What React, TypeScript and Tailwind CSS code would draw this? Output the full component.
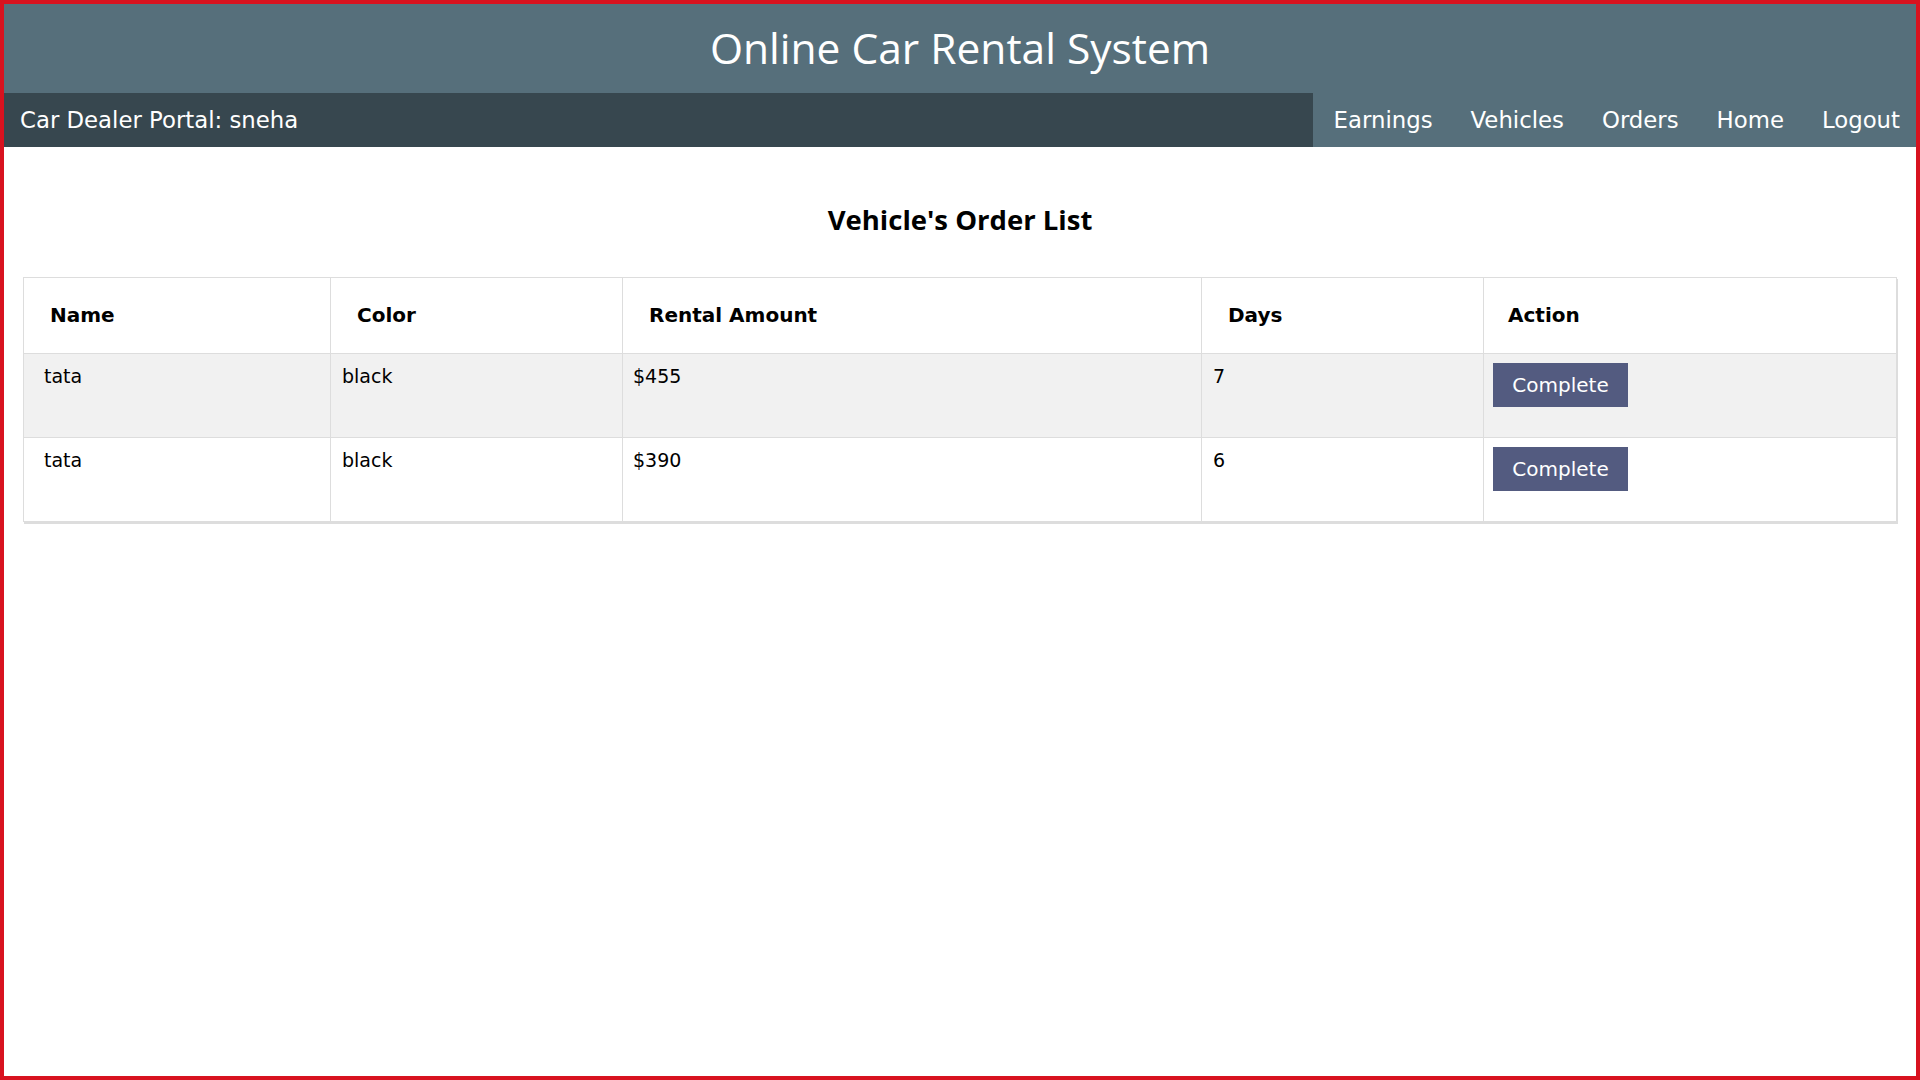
import React from 'react';

const orders = [
  { name: 'tata', color: 'black', amount: '$455', days: '7' },
  { name: 'tata', color: 'black', amount: '$390', days: '6' },
];

const links = ['Earnings', 'Vehicles', 'Orders', 'Home', 'Logout'];

export default function App() {
  return (
    <div className="min-h-screen h-[1080px] border-4 border-[#d8121f] bg-white text-black font-['DejaVu_Sans',sans-serif]">
      <header className="h-[89px] bg-[#566f7b] flex items-center justify-center">
        <h1 className="text-[42.5px] text-white font-['Open_Sans',sans-serif] font-normal leading-none">Online Car Rental System</h1>
      </header>

      <nav className="h-[54px] flex bg-[#566f7b] text-white text-[22.8px]">
        <div className="flex-1 bg-[#37474f] flex items-center pl-[16px]">Car Dealer Portal: sneha</div>
        <div className="flex items-center pl-[2px]">
          {links.map((l) => (
            <a key={l} href="#" className="px-[19px] last:pr-[16px] h-full flex items-center">{l}</a>
          ))}
        </div>
      </nav>

      <main className="px-[19px]">
        <h2 className="text-center font-['Open_Sans',sans-serif] font-bold text-[27.5px] mt-[59px] mb-[43px] leading-none">Vehicle's Order List</h2>

        <table className="w-full border-collapse border border-[#ddd] shadow-[1px_2px_0_#ddd] text-[19px]">
          <thead>
            <tr className="h-[76px] text-[20px]">
              <th className="w-[307px] border border-[#ddd] text-left font-bold pl-[26px]">Name</th>
              <th className="w-[292px] border border-[#ddd] text-left font-bold pl-[26px]">Color</th>
              <th className="w-[579px] border border-[#ddd] text-left font-bold pl-[26px]">Rental Amount</th>
              <th className="w-[282px] border border-[#ddd] text-left font-bold pl-[26px]">Days</th>
              <th className="border border-[#ddd] text-left font-bold pl-[24px]">Action</th>
            </tr>
          </thead>
          <tbody>
            {orders.map((o, i) => (
              <tr key={i} className={i % 2 === 0 ? 'h-[84px] bg-[#f1f1f1]' : 'h-[84px] bg-white'}>
                <td className="border border-[#ddd] align-top pt-[8px] pl-[20px]">{o.name}</td>
                <td className="border border-[#ddd] align-top pt-[8px] pl-[11px]">{o.color}</td>
                <td className="border border-[#ddd] align-top pt-[8px] pl-[10px]">{o.amount}</td>
                <td className="border border-[#ddd] align-top pt-[8px] pl-[11px]">{o.days}</td>
                <td className="border border-[#ddd] align-top pt-[9px] pl-[9px]">
                  <button className="w-[135px] h-[44px] bg-[#535b80] text-white text-[20px]">Complete</button>
                </td>
              </tr>
            ))}
          </tbody>
        </table>
      </main>
    </div>
  );
}
